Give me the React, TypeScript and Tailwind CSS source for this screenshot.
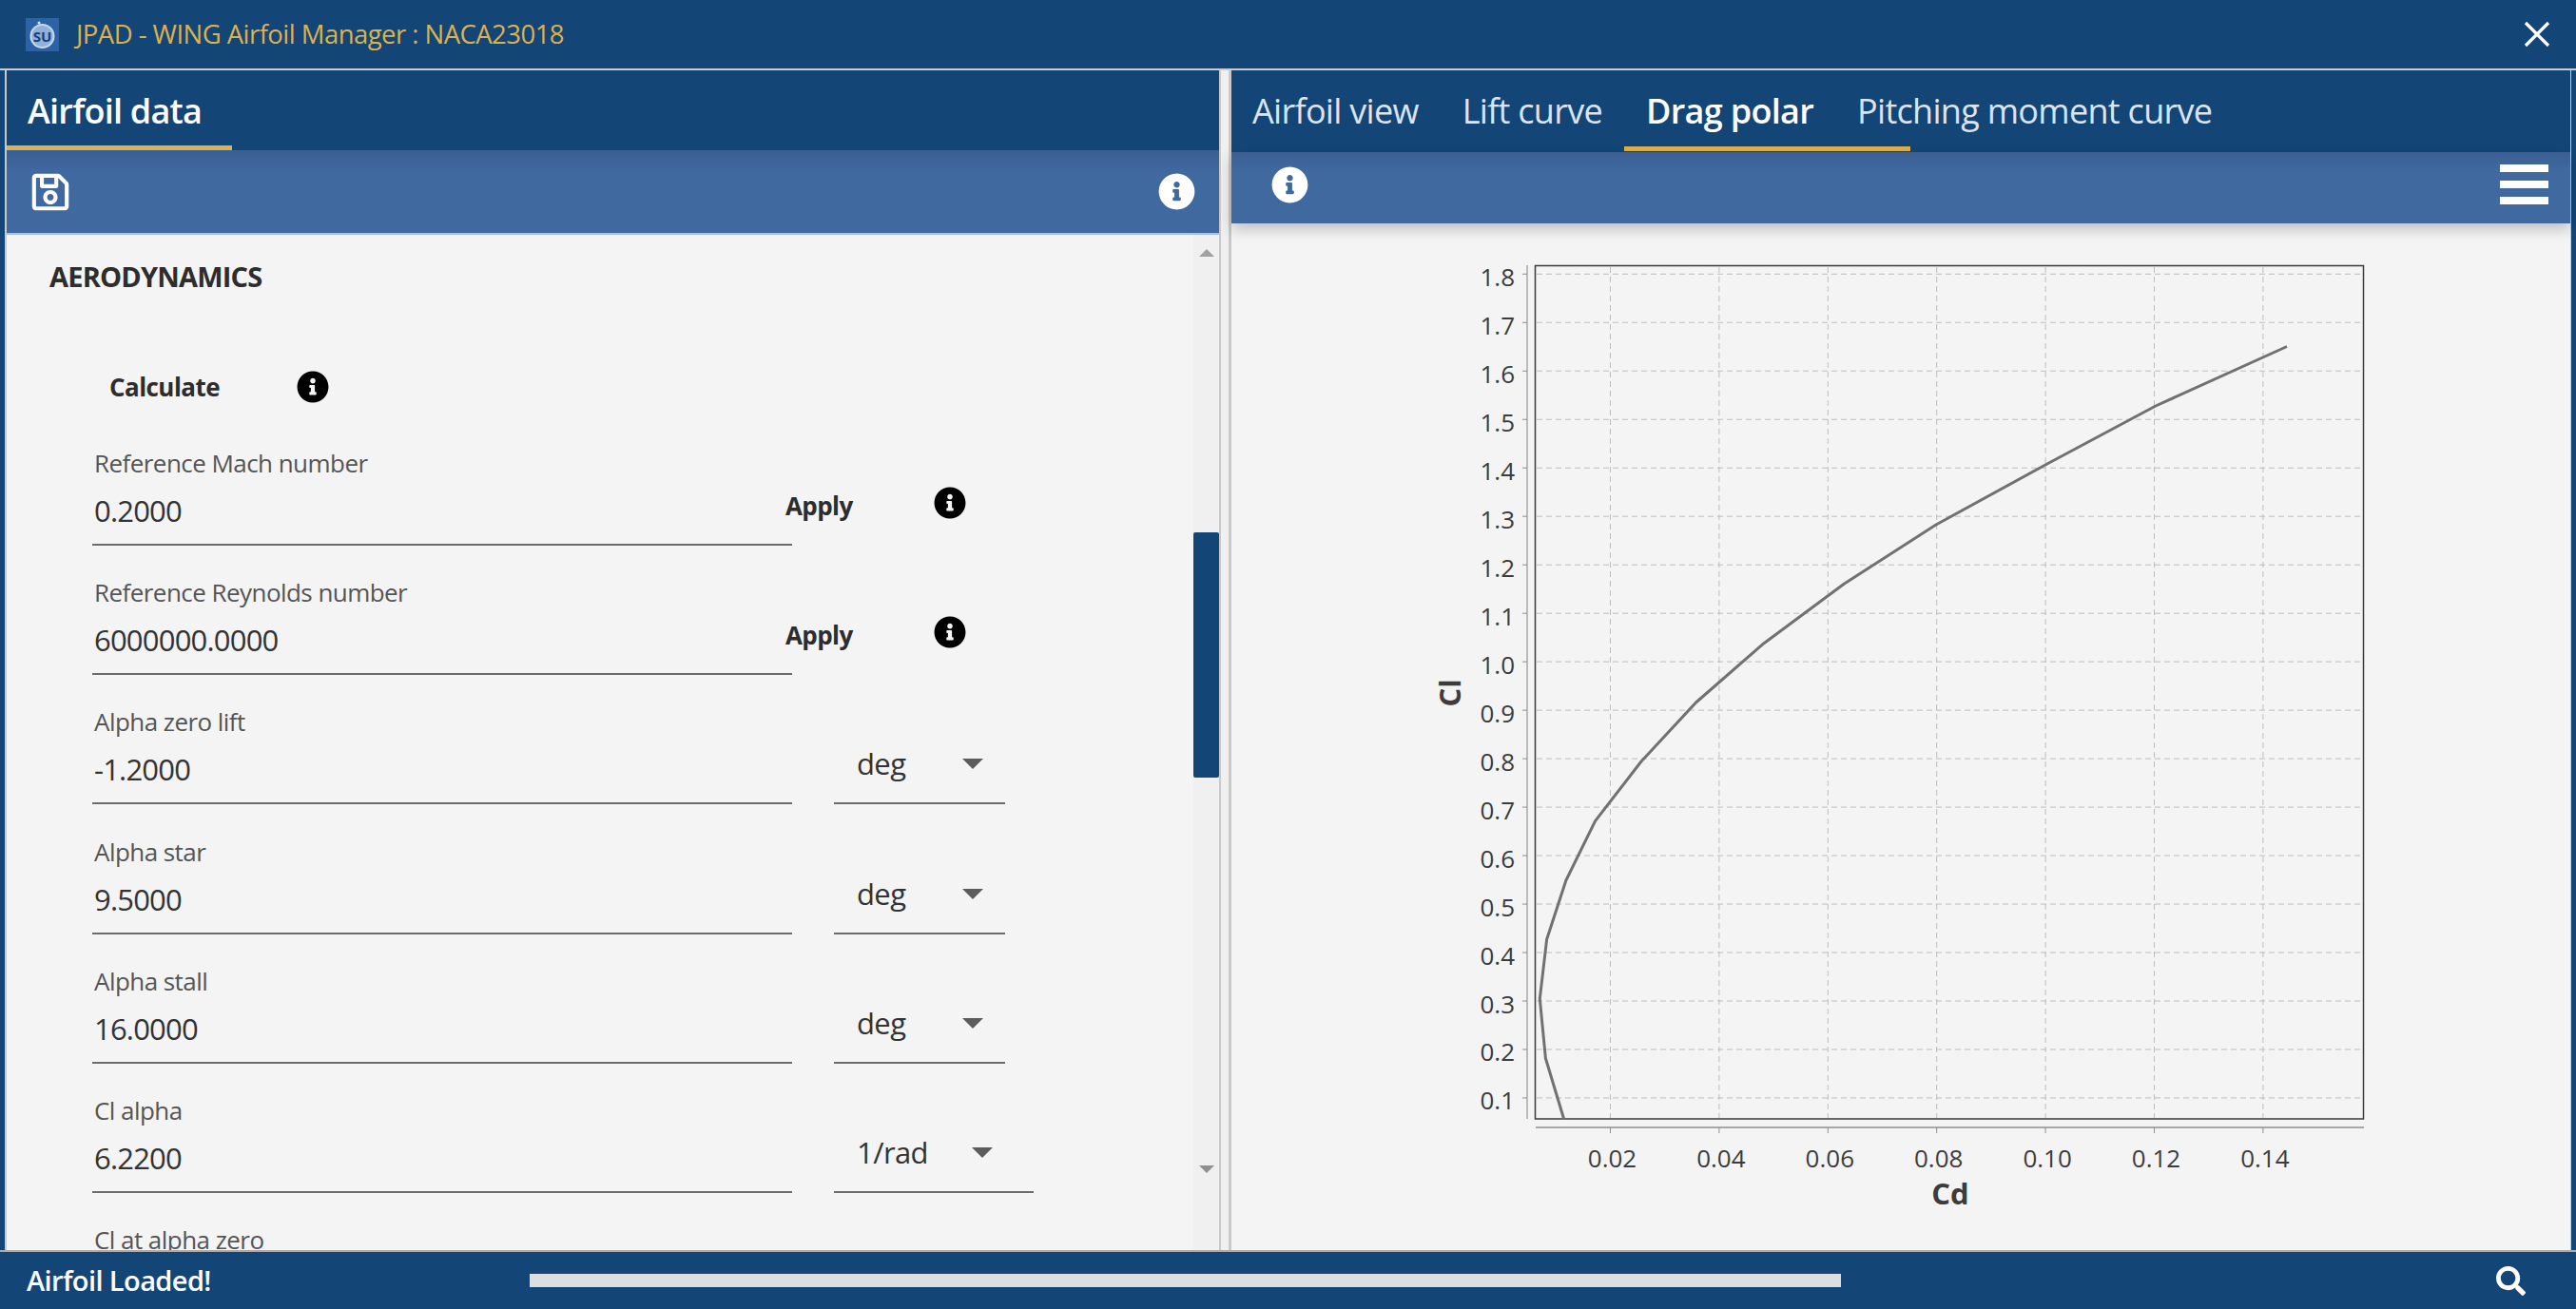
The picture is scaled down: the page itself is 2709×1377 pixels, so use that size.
import { FaInfoCircle, FaRegSave, FaSearch } from "react-icons/fa";

const FONT = "font-['Open_Sans','Noto_Sans',sans-serif]";

const yTicks = [1.8, 1.7, 1.6, 1.5, 1.4, 1.3, 1.2, 1.1, 1.0, 0.9, 0.8, 0.7, 0.6, 0.5, 0.4, 0.3, 0.2, 0.1];
const xTicks = [0.02, 0.04, 0.06, 0.08, 0.1, 0.12, 0.14];

const yPos = (v: number) => 288.3 + (1.8 - v) * 509.8;
const xPos = (v: number) => 1693.5 + ((v - 0.02) / 0.02) * 114.4;

// chart svg origin sits at the right panel corner
const OX = 1295;
const OY = 235;

const curve: [number, number][] = [
  [1644.6, 1177],
  [1625.4, 1113.3],
  [1619.3, 1050.7],
  [1626.6, 988.3],
  [1646.9, 926],
  [1677.6, 863.6],
  [1726, 801],
  [1783.5, 739],
  [1855, 676.7],
  [1939.2, 614.3],
  [2036.4, 551.7],
  [2151, 489],
  [2267, 427],
  [2405, 364.5],
];

const DragPolarChart = () => (
  <svg width={1409} height={1080} viewBox={`${OX} ${OY} 1409 1080`} className="block">
    <g stroke="#bdbdbd" strokeWidth={1} strokeDasharray="6 4">
      {yTicks.map((t) => (
        <line key={t} x1={1616} x2={2485} y1={yPos(t)} y2={yPos(t)} />
      ))}
      {xTicks.map((t) => (
        <line key={t} x1={xPos(t)} x2={xPos(t)} y1={281} y2={1176} />
      ))}
    </g>
    <rect x={1614.5} y={279.5} width={871} height={897.5} fill="none" stroke="#3a3a3a" strokeWidth={1.5} />
    <line x1={1606} x2={1606} y1={279} y2={1177} stroke="#a8a8a8" strokeWidth={1.5} />
    <line x1={1615} x2={2486} y1={1186} y2={1186} stroke="#8f8f8f" strokeWidth={1.5} />
    {yTicks.map((t) => (
      <g key={t}>
        <line x1={1601} x2={1606} y1={yPos(t)} y2={yPos(t)} stroke="#8f8f8f" />
        <text
          x={1593}
          y={yPos(t) + 12.5}
          textAnchor="end"
          fontFamily="'Open Sans'"
          fontSize={26}
          fill="#3c3c3c"
        >
          {t.toFixed(1)}
        </text>
      </g>
    ))}
    {xTicks.map((t) => (
      <g key={t}>
        <line x1={xPos(t)} x2={xPos(t)} y1={1186} y2={1192} stroke="#8f8f8f" />
        <text
          x={xPos(t) + 2}
          y={1228}
          textAnchor="middle"
          fontFamily="'Open Sans'"
          fontSize={26}
          fill="#3c3c3c"
        >
          {t.toFixed(2)}
        </text>
      </g>
    ))}
    <polyline
      points={curve.map((p) => p.join(",")).join(" ")}
      fill="none"
      stroke="#717171"
      strokeWidth={3}
      strokeLinejoin="round"
    />
    <text
      x={2051}
      y={1267}
      textAnchor="middle"
      fontFamily="'Open Sans'"
      fontWeight={700}
      fontSize={31}
      fill="#3c3c3c"
    >
      Cd
    </text>
    <text
      transform="translate(1536 729) rotate(-90)"
      textAnchor="middle"
      fontFamily="'Open Sans'"
      fontWeight={700}
      fontSize={31}
      fill="#3c3c3c"
    >
      Cl
    </text>
  </svg>
);

const Logo = () => (
  <svg width={35} height={35} viewBox="0 0 35 35" className="shrink-0">
    <rect width={35} height={35} fill="#2b62a8" />
    <circle cx={17.5} cy={19} r={12} fill="#8fb0d8" stroke="#c7d8ee" strokeWidth={2} />
    <circle cx={14} cy={5} r={1.5} fill="#dce6f3" />
    <text x={17.5} y={25} textAnchor="middle" fontFamily="'Open Sans'" fontWeight={700} fontSize={15} fill="#17407a">
      SU
    </text>
  </svg>
);

const Apply = () => (
  <>
    <span className="absolute left-[819px] top-[76px] text-[26px] leading-[36px] font-bold tracking-[-0.6px] text-[#2d2d2d]">
      Apply
    </span>
    <FaInfoCircle className="absolute left-[975px] top-[74px] text-[34px] text-black" />
  </>
);

interface FieldProps {
  label: string;
  value: string;
  unit?: string;
  apply?: boolean;
}

const Field = ({ label, value, unit, apply }: FieldProps) => (
  <div className="relative h-[136.2px] shrink-0 pl-[90px]">
    <div className="flex gap-[44px]">
      <div className="w-[736px] border-b-2 border-[#6b6b6b] pl-[2px] h-[136px]">
        <div className="mt-[31px] text-[26px] leading-[36px] tracking-[-0.55px] text-[#555555]">{label}</div>
        <div className="mt-[10px] text-[31px] leading-[44px] tracking-[-0.8px] text-[#333333]">{value}</div>
      </div>
      {unit && (
        <div
          className={`mt-[71px] flex h-[65px] items-start border-b-2 border-[#6b6b6b] pl-[24px] ${
            unit === "deg" ? "w-[180px] gap-[60px]" : "w-[210px] gap-[46px]"
          }`}
        >
          <span className="text-[31px] leading-[44px] tracking-[-0.6px] text-[#333333]">{unit}</span>
          <span className="mt-[17px] h-0 w-0 border-x-[11px] border-t-[11px] border-x-transparent border-t-[#5c5c5c]" />
        </div>
      )}
    </div>
    {apply && <Apply />}
  </div>
);

const tabBase = "text-[36px] leading-[48px] tracking-[-0.7px]";

export default function App() {
  return (
    <div className={`flex h-[1377px] w-[2709px] flex-col overflow-hidden bg-[#134677] ${FONT}`}>
      {/* title bar */}
      <div className="flex h-[72px] shrink-0 items-center pl-[27px] pr-[27px]">
        <Logo />
        <span className="ml-[18px] text-[27.5px] tracking-[-0.55px] text-[#dcb14f]">
          JPAD - WING Airfoil Manager : NACA23018
        </span>
        <svg width={28} height={28} viewBox="0 0 28 28" className="ml-auto">
          <path d="M2 2 L26 26 M26 2 L2 26" stroke="#fff" strokeWidth={3.2} />
        </svg>
      </div>

      {/* panels */}
      <div className="flex h-[1243px] shrink-0 border-t-2 border-[#c9ccd0] pl-[5px] pr-[5px]">
        {/* left */}
        <div className="flex w-[1279px] shrink-0 flex-col border-x-2 border-[#c9c9c9] bg-[#f4f4f4]">
          <div className="flex h-[84px] shrink-0 bg-[#134677]">
            <div className="flex h-[84px] w-[237px] items-start border-b-[5px] border-[#dcb14f] pl-[22px] pt-[19px]">
              <span className="text-[36px] leading-[48px] font-semibold tracking-[-0.75px] text-white">Airfoil data</span>
            </div>
          </div>
          <div className="flex h-[89px] shrink-0 items-center justify-between border-b-2 border-[#a6c0e2] bg-[#40699f] bg-gradient-to-b from-[#3a5f92] to-[#40699f] to-[25%] pl-[24px] pr-[25px]">
            <FaRegSave className="text-[44px] text-white" />
            <FaInfoCircle className="text-[39px] text-white" />
          </div>
          <div className="relative flex min-h-0 flex-1 overflow-hidden">
            <div className="flex-1 overflow-hidden">
              <div className="pl-[45px] pt-[26px] text-[29px] leading-[36px] font-bold tracking-[-0.8px] text-[#2d2d2d]">
                AERODYNAMICS
              </div>
              <div className="mt-[80px] flex h-[36px] items-center pl-[108px]">
                <span className="w-[197px] text-[26px] font-bold tracking-[-0.55px] text-[#2d2d2d]">Calculate</span>
                <FaInfoCircle className="text-[34px] text-black" />
              </div>
              <div className="mt-[13px] flex flex-col">
                <Field label="Reference Mach number" value="0.2000" apply />
                <Field label="Reference Reynolds number" value="6000000.0000" apply />
                <Field label="Alpha zero lift" value="-1.2000" unit="deg" />
                <Field label="Alpha star" value="9.5000" unit="deg" />
                <Field label="Alpha stall" value="16.0000" unit="deg" />
                <Field label="Cl alpha" value="6.2200" unit="1/rad" />
                <Field label="Cl at alpha zero" value="" />
              </div>
            </div>
            {/* scrollbar */}
            <div className="absolute right-0 top-0 flex h-full w-[27px] flex-col items-center bg-[#f0f0f0] pt-[15px]">
              <span className="h-0 w-0 border-x-[8px] border-b-[8px] border-x-transparent border-b-[#a0a0a0]" />
              <span className="mt-[290px] h-[258px] w-[27px] rounded-[2px] bg-[#134677]" />
              <span className="mt-[408px] h-0 w-0 border-x-[8px] border-t-[8px] border-x-transparent border-t-[#909090]" />
            </div>
          </div>
        </div>

        {/* divider */}
        <div className="w-[8px] shrink-0 bg-[#f0f0f0]" />

        {/* right */}
        <div className="flex min-w-0 flex-1 flex-col border-x-[3px] border-r-[1px] border-[#c9c9c9] bg-[#f4f4f4]">
          <div className="flex h-[86px] shrink-0 items-start gap-[46px] bg-[#134677] pl-[22px] pt-[19px]">
            <span className={`${tabBase} text-[#dbe4f0]`}>Airfoil view</span>
            <span className={`${tabBase} text-[#dbe4f0]`}>Lift curve</span>
            <span className={`relative ${tabBase} font-semibold text-white`}>
              Drag polar
              <span className="absolute -left-[23px] -right-[98px] top-[61px] h-[5px] w-[301px] bg-[#dcb14f]" />
            </span>
            <span className={`${tabBase} text-[#dbe4f0]`}>Pitching moment curve</span>
          </div>
          <div className="relative z-10 flex h-[75px] shrink-0 items-center justify-between bg-[#40699f] bg-gradient-to-b from-[#3a5f92] to-[#40699f] to-[25%] pl-[42px] pr-[23px] shadow-[0_6px_14px_rgba(0,0,0,0.22)]">
            <FaInfoCircle className="-mt-[6px] text-[39px] text-white" />
            <div className="-mt-[7px] flex flex-col gap-[9px]">
              <span className="h-[8px] w-[51px] bg-white" />
              <span className="h-[8px] w-[51px] bg-white" />
              <span className="h-[8px] w-[51px] bg-white" />
            </div>
          </div>
          <div className="min-h-0 flex-1 overflow-hidden">
            <DragPolarChart />
          </div>
        </div>
      </div>

      {/* status bar */}
      <div className="flex h-[62px] shrink-0 items-center border-t-2 border-[#a9adb2] pl-[28px] pr-[53px]">
        <span className="w-[529px] text-[29px] font-semibold tracking-[-0.6px] text-white">Airfoil Loaded!</span>
        <div className="h-[14px] w-[1379px] bg-[#dedede]" />
        <FaSearch className="ml-auto text-[31px] text-white" />
      </div>
    </div>
  );
}
